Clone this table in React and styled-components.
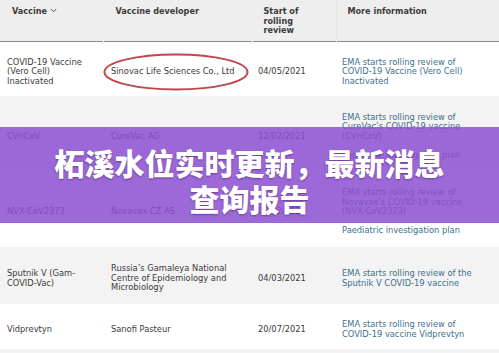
import React from "react";
import styled, { createGlobalStyle } from "styled-components";

const Global = createGlobalStyle`
  html, body { margin: 0; padding: 0; background: #fff; }
  body { font-family: "DejaVu Sans", Verdana, sans-serif; }
`;

const Page = styled.div`
  position: relative;
  width: 499px;
  height: 353px;
  overflow: hidden;
  background: #fff;
`;

const Table = styled.table`
  width: 499px;
  table-layout: fixed;
  border-collapse: collapse;
  border-spacing: 0;
`;

const HeadRow = styled.tr`
  background: #eeeeee;
  border-bottom: 1px solid #8a8a8a;
`;

const Th = styled.th`
  height: 41px;
  box-sizing: border-box;
  padding: 7px 0 0 ${(p) => p.$pl || 12}px;
  vertical-align: top;
  text-align: left;
  font-size: 8.1px;
  line-height: 9.5px;
  font-weight: bold;
  color: #3a3a3a;
  border-right: 1px solid ${(p) => (p.$sep ? "#e6e6e6" : "transparent")};
`;

const Row = styled.tr`
  background: ${(p) => (p.$alt ? "#f3f3f3" : "#ffffff")};
  height: ${(p) => p.$h}px;
`;

const Td = styled.td`
  padding: 6px 4px 0 ${(p) => p.$pl || 7}px;
  vertical-align: middle;
  font-size: 8.3px;
  line-height: 9.5px;
  color: #3a3a3a;
`;

const LinkText = styled.div`
  color: #3d6f8c;
  & + & { margin-top: 9.5px; }
`;

const Chevron = styled.svg`
  width: 7px;
  height: 5px;
  margin-left: 3px;
  vertical-align: 1px;
`;

const Oval = styled.svg`
  position: absolute;
  left: 102px;
  top: 52px;
  width: 148px;
  height: 40px;
  pointer-events: none;
`;

const Band = styled.div`
  position: absolute;
  left: 0;
  right: 0;
  top: 127px;
  height: 96px;
  background: rgba(140, 79, 209, 0.85);
  display: flex;
  flex-direction: column;
  align-items: center;
  justify-content: center;
  padding-top: 10px;
  box-sizing: border-box;
`;

const Title = styled.div`
  font-family: "Noto Sans CJK SC", "Noto Sans", sans-serif;
  font-weight: 900;
  font-size: 30px;
  line-height: 36px;
  color: #ffffff;
  text-align: center;
  text-shadow: 0 1px 2px rgba(40, 10, 70, 0.45);
`;

const rows = [
  {
    h: 55,
    alt: false,
    vaccine: ["COVID-19 Vaccine", "(Vero Cell)", "Inactivated"],
    dev: ["Sinovac Life Sciences Co., Ltd"],
    date: "04/05/2021",
    info: [["EMA starts rolling review of", "COVID-19 Vaccine (Vero Cell)", "Inactivated"]],
  },
  {
    h: 75,
    alt: true,
    vaccine: ["CVnCoV"],
    dev: ["CureVac AG"],
    date: "12/02/2021",
    info: [
      ["EMA starts rolling review of", "CureVac\u2019s COVID-19 vaccine", "(CVnCoV)"],
      ["Paediatric investigation plan"],
    ],
  },
  {
    h: 76,
    alt: false,
    vaccine: ["NVX-CoV2373"],
    dev: ["Novavax CZ AS"],
    date: "03/02/2021",
    info: [
      ["EMA starts rolling review of", "Novavax\u2019s COVID-19 vaccine", "(NVX-CoV2373)"],
      ["Paediatric investigation plan"],
    ],
  },
  {
    h: 57,
    alt: true,
    vaccine: ["Sputnik V (Gam-", "COVID-Vac)"],
    dev: ["Russia\u2019s Gamaleya National", "Centre of Epidemiology and", "Microbiology"],
    date: "04/03/2021",
    info: [["EMA starts rolling review of the", "Sputnik V COVID-19 vaccine"]],
  },
  {
    h: 45,
    alt: false,
    vaccine: ["Vidprevtyn"],
    dev: ["Sanofi Pasteur"],
    date: "20/07/2021",
    info: [["EMA starts rolling review of", "COVID-19 vaccine Vidprevtyn"]],
  },
  {
    h: 20,
    alt: true,
    vaccine: [""],
    dev: [""],
    date: "",
    info: [[""]],
  },
];

const Lines = ({ lines }) =>
  lines.map((l, i) => (
    <React.Fragment key={i}>
      {l}
      {i < lines.length - 1 && <br />}
    </React.Fragment>
  ));

export default function App() {
  return (
    <>
      <Global />
      <Page>
        <Table>
          <colgroup>
            <col style={{ width: 103 }} />
            <col style={{ width: 149 }} />
            <col style={{ width: 84 }} />
            <col style={{ width: 163 }} />
          </colgroup>
          <thead>
            <HeadRow>
              <Th>
                Vaccine
                <Chevron viewBox="0 0 7 5">
                  <path d="M0.8 1 L3.5 3.8 L6.2 1" fill="none" stroke="#555" strokeWidth="1" />
                </Chevron>
              </Th>
              <Th $pl={12}>Vaccine developer</Th>
              <Th $pl={11} $sep>
                Start of
                <br />
                rolling
                <br />
                review
              </Th>
              <Th $pl={11}>More information</Th>
            </HeadRow>
          </thead>
          <tbody>
            {rows.map((r, i) => (
              <Row key={i} $alt={r.alt} $h={r.h}>
                <Td>
                  <Lines lines={r.vaccine} />
                </Td>
                <Td $pl={8}>
                  <Lines lines={r.dev} />
                </Td>
                <Td $pl={6}>{r.date}</Td>
                <Td $pl={6}>
                  {r.info.map((p, j) => (
                    <LinkText key={j}>
                      <Lines lines={p} />
                    </LinkText>
                  ))}
                </Td>
              </Row>
            ))}
          </tbody>
        </Table>
        <Oval viewBox="0 0 148 40">
          <ellipse cx="74" cy="20" rx="71.5" ry="17.5" fill="none" stroke="#c1454a" strokeWidth="2" />
        </Oval>
        <Band>
          <Title>柘溪水位实时更新，最新消息</Title>
          <Title>查询报告</Title>
        </Band>
      </Page>
    </>
  );
}
